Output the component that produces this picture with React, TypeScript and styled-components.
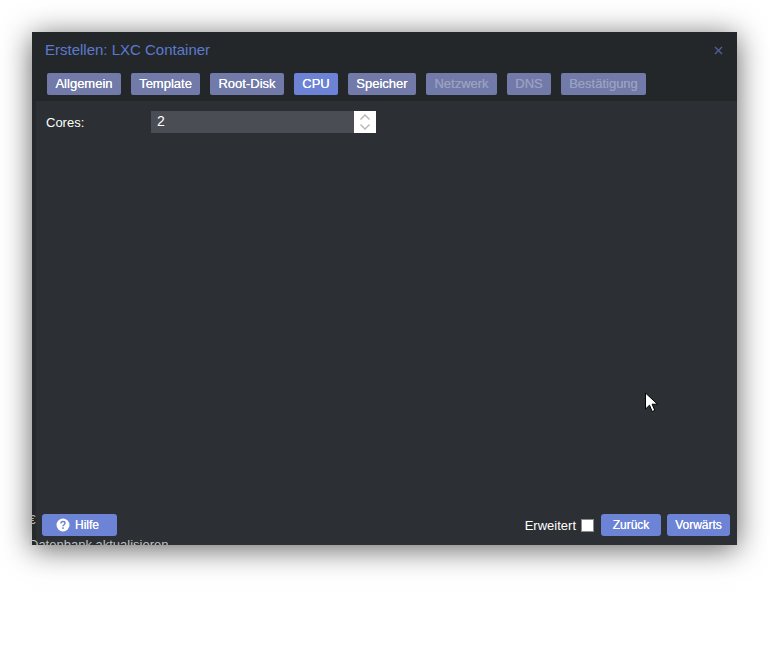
import React from 'react';
import styled, { createGlobalStyle } from 'styled-components';

const GlobalStyle = createGlobalStyle`
  html, body {
    margin: 0;
    background: #fff;
    font-family: "Liberation Sans", Arial, sans-serif;
  }
`;

const Page = styled.div`
  width: 769px;
  height: 658px;
  padding: 32px;
  box-sizing: border-box;
  overflow: hidden;
`;

const Dialog = styled.div`
  position: relative;
  width: 705px;
  height: 513px;
  display: flex;
  flex-direction: column;
  background: #26292c;
  box-shadow: 0 4px 28px rgba(0, 0, 0, 0.62);
`;

const Header = styled.div`
  height: 69px;
  flex: none;
  background: #24272a;
  box-sizing: border-box;
  padding: 10px 14px 0 13px;
`;

const TitleRow = styled.div`
  display: flex;
  align-items: center;
  justify-content: space-between;
  height: 16px;
`;

const Title = styled.div`
  color: #5b7ad0;
  font-size: 15px;
  line-height: 16px;
`;

const Close = styled.svg`
  width: 9px;
  height: 9px;
`;

const Tabs = styled.div`
  display: flex;
  gap: 10px;
  margin: 15px 0 0 2px;
`;

const Tab = styled.div<{ $state: 'done' | 'active' | 'off'; $width: number }>`
  width: ${(p) => p.$width}px;
  height: 22px;
  line-height: 22px;
  text-align: center;
  border-radius: 2px;
  font-size: 13px;
  color: ${(p) => (p.$state === 'off' ? '#9aa0c0' : '#fff')};
  background: ${(p) => (p.$state === 'active' ? '#6d84d6' : '#717aa8')};
  text-shadow: 0 0 0.4px currentColor;
`;

const Main = styled.div`
  flex: 1;
  margin-left: 4px;
  display: flex;
  flex-direction: column;
  background: #2c2f33;
`;

const Content = styled.div`
  flex: 1;
  padding: 10px 10px;
`;

const FieldRow = styled.div`
  display: flex;
  align-items: center;
  height: 22px;
`;

const Label = styled.div`
  width: 105px;
  color: #fff;
  font-size: 13px;
  padding-top: 1px;
`;

const Spinner = styled.div`
  display: flex;
  width: 225px;
  height: 22px;
`;

const SpinValue = styled.div`
  flex: 1;
  background: #4a4d54;
  color: #fff;
  font-size: 14px;
  line-height: 20px;
  padding-left: 6px;
`;

const SpinButton = styled.div`
  width: 22px;
  background: #fff;
  display: flex;
  align-items: center;
  justify-content: center;
`;

const Footer = styled.div`
  display: flex;
  align-items: center;
  justify-content: space-between;
  height: 22px;
  padding: 0 7px 9px 6px;
`;

const FooterRight = styled.div`
  display: flex;
  align-items: center;
  gap: 6px;
`;

const FooterButton = styled.div<{ $width: number }>`
  width: ${(p) => p.$width}px;
  height: 22px;
  border-radius: 3px;
  background: #6d84d6;
  color: #fff;
  font-size: 12px;
  display: flex;
  align-items: center;
  justify-content: center;
  gap: 5px;
  text-shadow: 0 0 0.3px currentColor;
`;

const HelpButton = styled(FooterButton)`
  justify-content: flex-start;
  padding-left: 14px;
  box-sizing: border-box;
`;

const CheckGroup = styled.div`
  display: flex;
  align-items: center;
  gap: 5px;
  margin-right: 1px;
`;

const CheckLabel = styled.div`
  color: #fff;
  font-size: 13px;
  margin-left: -1px;
`;

const CheckBox = styled.div`
  width: 11px;
  height: 11px;
  background: #fff;
  border: 1px solid #8b8b8b;
`;

// text of the page behind the dialog that shows through at its lower edge
const BehindText = styled.div`
  position: absolute;
  left: -3px;
  bottom: 0;
  height: 6px;
  overflow: hidden;
  color: #bfc1c3;
  font-size: 13px;
  line-height: 12px;
`;

const BehindGlyph = styled.div`
  position: absolute;
  left: 0;
  top: 482px;
  width: 4px;
  overflow: hidden;
  color: #b4b8ba;
  font-size: 12px;
  line-height: 12px;
  text-indent: -3px;
`;

const Cursor = styled.svg`
  position: absolute;
  left: 612px;
  top: 360px;
  width: 14px;
  height: 21px;
`;

type TabState = 'done' | 'active' | 'off';

const tabs: { label: string; state: TabState; width: number }[] = [
  { label: 'Allgemein', state: 'done', width: 74 },
  { label: 'Template', state: 'done', width: 69 },
  { label: 'Root-Disk', state: 'done', width: 74 },
  { label: 'CPU', state: 'active', width: 44 },
  { label: 'Speicher', state: 'done', width: 68 },
  { label: 'Netzwerk', state: 'off', width: 71 },
  { label: 'DNS', state: 'off', width: 44 },
  { label: 'Bestätigung', state: 'off', width: 85 },
];

const App = () => {
  return (
    <Page>
      <GlobalStyle />
      <Dialog>
        <Header>
          <TitleRow>
            <Title>Erstellen: LXC Container</Title>
            <Close viewBox="0 0 9 9">
              <path d="M1 1l7 7M8 1L1 8" stroke="#4e5f9e" strokeWidth="1.4" fill="none" />
            </Close>
          </TitleRow>
          <Tabs>
            {tabs.map((t) => (
              <Tab key={t.label} $state={t.state} $width={t.width}>
                {t.label}
              </Tab>
            ))}
          </Tabs>
        </Header>
        <Main>
          <Content>
            <FieldRow>
              <Label>Cores:</Label>
              <Spinner>
                <SpinValue>2</SpinValue>
                <SpinButton>
                  <svg width="12" height="18" viewBox="0 0 12 18">
                    <path
                      d="M1.5 6.5L6 2l4.5 4.5M1.5 11.5L6 16l4.5-4.5"
                      stroke="#b4b4b4"
                      strokeWidth="1.3"
                      fill="none"
                    />
                  </svg>
                </SpinButton>
              </Spinner>
            </FieldRow>
          </Content>
          <Footer>
            <HelpButton $width={75}>
              <svg width="14" height="14" viewBox="0 0 14 14">
                <circle cx="7" cy="7" r="6.5" fill="#fff" />
                <path
                  d="M5 5.4C5 4.2 5.9 3.6 7 3.6s2 .7 2 1.7c0 1.5-2 1.4-2 3"
                  stroke="#6d84d6"
                  strokeWidth="1.5"
                  fill="none"
                />
                <rect x="6.2" y="9.3" width="1.6" height="1.6" fill="#6d84d6" />
              </svg>
              Hilfe
            </HelpButton>
            <FooterRight>
              <CheckGroup>
                <CheckLabel>Erweitert</CheckLabel>
                <CheckBox />
              </CheckGroup>
              <FooterButton $width={60}>Zurück</FooterButton>
              <FooterButton $width={63}>Vorwärts</FooterButton>
            </FooterRight>
          </Footer>
        </Main>
        <BehindGlyph>€</BehindGlyph>
        <BehindText>Datenbank aktualisieren</BehindText>
        <Cursor viewBox="0 0 14 21">
          <path
            d="M1.5 1v16l4-3.8 2.7 6.3 2.6-1.1-2.700-6.200h5.400z"
            fill="#fff"
            stroke="#000"
            strokeWidth="1"
          />
        </Cursor>
      </Dialog>
    </Page>
  );
};

export default App;
